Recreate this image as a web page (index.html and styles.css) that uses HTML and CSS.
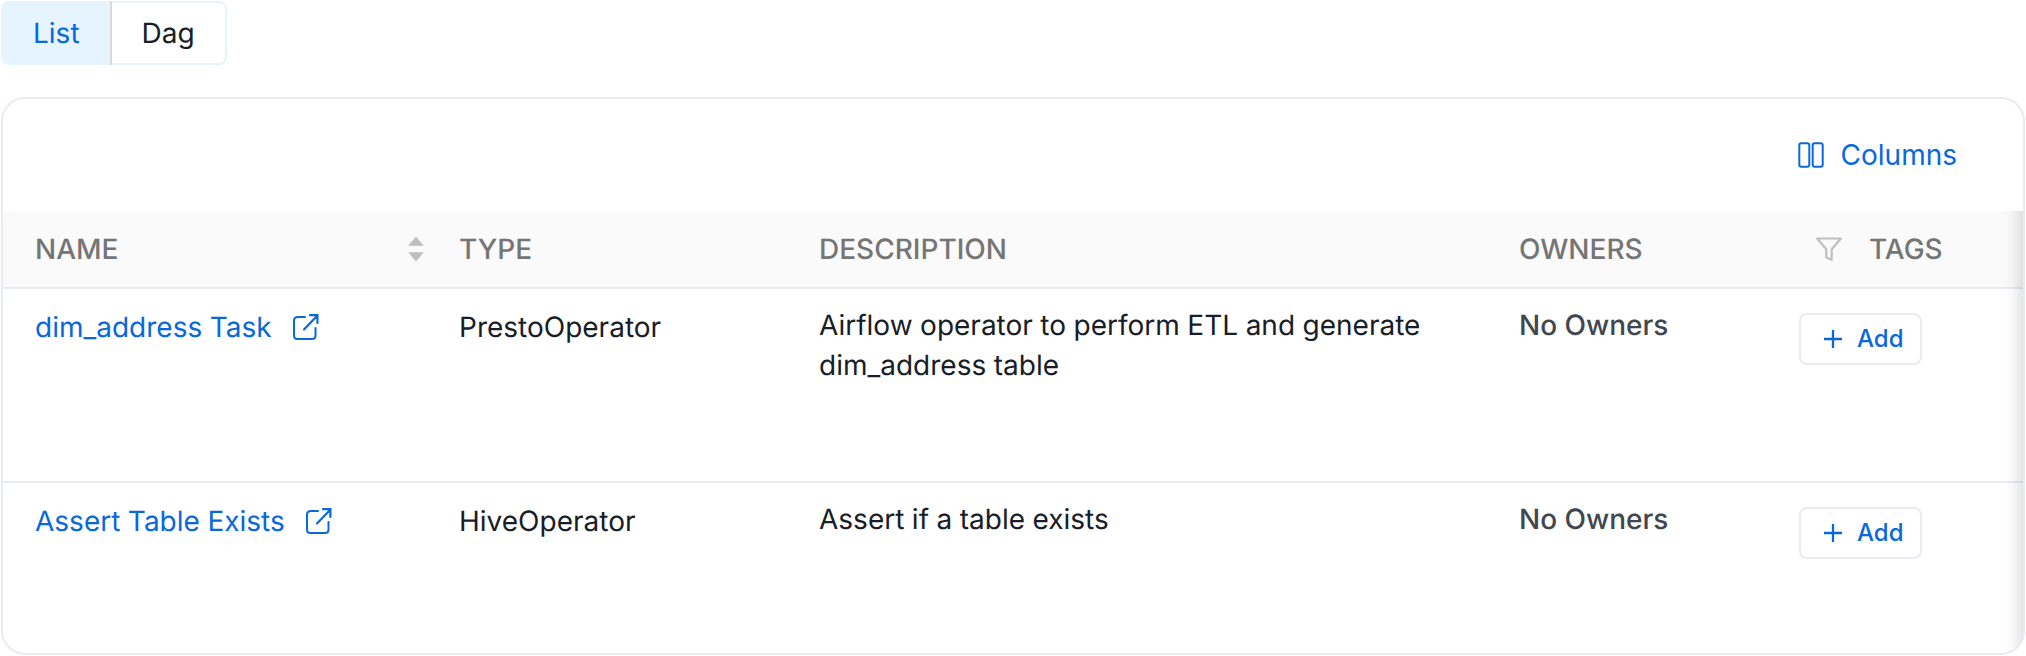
FILE: index.html
```html
<!DOCTYPE html>
<html lang="en">
<head>
<meta charset="utf-8">
<title>Pipeline tasks</title>
<link rel="stylesheet" href="styles.css">
</head>
<body>
<svg class="sprite" aria-hidden="true">
  <symbol id="external" viewBox="0 0 28 28">
    <path d="M13 4H6Q2 4 2 7.500V22.500Q2 26 5.500 26H20Q23.500 26 23.500 22.500V15" fill="none" stroke="currentColor" stroke-width="2" stroke-linecap="round"/>
    <path d="M12 16.500L25 3M18 2.200H25.400V10" fill="none" stroke="currentColor" stroke-width="2.200" stroke-linecap="round"/>
  </symbol>
  <symbol id="plus" viewBox="0 0 18 18">
    <path d="M9 0V18M0 9H18" fill="none" stroke="currentColor" stroke-width="2.300"/>
  </symbol>
</svg>
<div class="tabs">
  <div class="tab tab-active">List</div>
  <div class="tab">Dag</div>
</div>
<section class="card">
  <div class="toolbar">
    <button class="columns">
      <svg class="columns-icon" viewBox="0 0 26 26"><g fill="none" stroke="currentColor" stroke-width="2"><rect x="1.300" y="1.300" width="10" height="23.400" rx="2"/><rect x="14.700" y="1.300" width="10" height="23.400" rx="2"/></g></svg>
      <span>Columns</span>
    </button>
  </div>
  <div class="table">
    <div class="row head">
      <div class="cell sortable"><span>NAME</span>
        <svg class="sort" viewBox="0 0 16 26"><path d="M8 .5L15.700 9.700H.3zM8 25.500L15.700 16.300H.3z" fill="#bfbfbf"/></svg>
      </div>
      <div class="cell">TYPE</div>
      <div class="cell">DESCRIPTION</div>
      <div class="cell">OWNERS</div>
      <div class="cell filterable">
        <svg class="filter" viewBox="0 0 26 24"><path d="M1.200 1.500H24.800L15.700 12.300V22.800L10.300 20.500V12.300Z" fill="none" stroke="#bfbfbf" stroke-width="2.200" stroke-linejoin="round"/></svg>
        <span>TAGS</span>
      </div>
    </div>
    <div class="row first">
      <div class="cell name"><a class="link">dim_address Task</a><svg class="external"><use href="#external"/></svg></div>
      <div class="cell type">PrestoOperator</div>
      <div class="cell description">Airflow operator to perform ETL and generate dim_address table</div>
      <div class="cell owners">No Owners</div>
      <div class="cell tags"><button class="add"><svg class="plus"><use href="#plus"/></svg><span>Add</span></button></div>
    </div>
    <div class="row last">
      <div class="cell name"><a class="link">Assert Table Exists</a><svg class="external"><use href="#external"/></svg></div>
      <div class="cell type">HiveOperator</div>
      <div class="cell description">Assert if a table exists</div>
      <div class="cell owners">No Owners</div>
      <div class="cell tags"><button class="add"><svg class="plus"><use href="#plus"/></svg><span>Add</span></button></div>
    </div>
    <div class="edge-shadow"></div>
  </div>
</section>
</body>
</html>
```
FILE: styles.css
```css
* { box-sizing: border-box; }

body {
  margin: 0;
  padding: 1px;
  background: #fff;
  color: #181d27;
  font: 400 28px/40px Inter, "Liberation Sans", sans-serif;
  font-optical-sizing: none;
  text-rendering: geometricPrecision;
  word-spacing: -.35px;
  overflow: hidden;
}

button {
  font: inherit;
  color: #0968da;
  background: #fff;
  border: 0;
  padding: 0;
}

.sprite { display: none; }
svg { flex: none; }

.tabs { display: flex; width: 226px; height: 64px; }
.tab {
  width: 115px;
  border: 2px solid #e6f4ff;
  border-left: 0;
  border-radius: 0 8px 8px 0;
  padding: 10px 0 0 29.5px;
}
.tab-active {
  width: 111px;
  color: #0968da;
  background: #e6f4ff;
  border: 0;
  border-right: 2px solid #d9d9d9;
  border-radius: 8px 0 0 8px;
  padding: 12px 0 0 32px;
}

.card {
  width: 2024px;
  height: 558px;
  margin-top: 32px;
  border: 2px solid #e8eaf6;
  border-radius: 24px;
  overflow: hidden;
}
.toolbar {
  height: 112px;
  display: flex;
  justify-content: flex-end;
  align-items: center;
  padding-right: 66px;
}
.columns { display: flex; align-items: center; gap: 17px; }
.columns-icon { width: 26px; height: 26px; }

.table { position: relative; }
.row { display: grid; grid-template-columns: 424px 360px 700px 280px 256px; }
.cell { padding-left: 32px; }
.head {
  height: 78px;
  background: #fafafa;
  border-bottom: 2px solid #e8eaf6;
  border-top-left-radius: 8px;
  color: #757575;
  font-weight: 500;
  align-items: center;
}
.sortable { display: flex; justify-content: space-between; align-items: center; padding-right: 3px; }
.sort { width: 16px; height: 26px; }
.filterable { display: flex; align-items: center; gap: 27px; padding-left: 49px; }
.filter { width: 26px; height: 24px; }
.first { height: 194px; border-bottom: 2px solid #e8eaf6; }
.last { height: 170px; }
.name { display: flex; padding-top: 18px; color: #0968da; }
.external { width: 28px; height: 28px; margin: 6px 0 0 20px; }
.type { padding-top: 18px; }
.description { padding-top: 16px; padding-right: 60px; }
.owners { padding-top: 16px; color: #414651; font-weight: 500; word-spacing: 0; }
.tags { padding-top: 24px; }
.add {
  width: 123px;
  height: 52px;
  display: flex;
  align-items: center;
  gap: 15px;
  padding-left: 23px;
  border: 2px solid #e8eaf6;
  border-radius: 8px;
  font-size: 24px;
  font-weight: 500;
}
.plus { width: 18px; height: 18px; }
.edge-shadow {
  position: absolute;
  top: 0;
  right: 0;
  width: 60px;
  height: 100%;
  box-shadow: inset -20px 0 16px -16px rgba(0, 0, 0, .15);
  pointer-events: none;
}
```
